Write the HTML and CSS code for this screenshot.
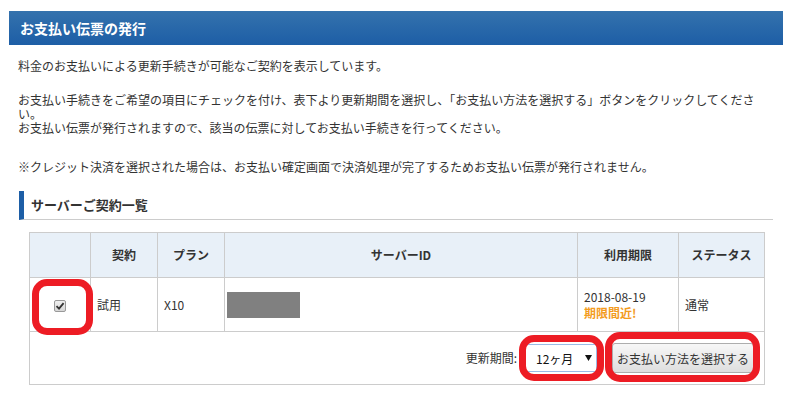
FILE: index.html
```html
<!DOCTYPE html>
<html lang="ja">
<head>
  <meta charset="utf-8">
  <title>お支払い伝票の発行</title>
  <link rel="stylesheet" href="styles.css">
</head>
<body>
  <div class="page">
    <h1 class="page-title">お支払い伝票の発行</h1>
    <div class="content">
      <p class="lead">料金のお支払いによる更新手続きが可能なご契約を表示しています。</p>
      <p class="lead lead-gap">お支払い手続きをご希望の項目にチェックを付け、表下より更新期間を選択し、「お支払い方法を選択する」ボタンをクリックしてください。
お支払い伝票が発行されますので、該当の伝票に対してお支払い手続きを行ってください。</p>
      <p class="note">※クレジット決済を選択された場合は、お支払い確定画面で決済処理が完了するためお支払い伝票が発行されません。</p>

      <h2 class="section-title">サーバーご契約一覧</h2>

      <table class="contracts">
        <colgroup>
          <col class="c-check">
          <col class="c-type">
          <col class="c-plan">
          <col class="c-id">
          <col class="c-limit">
          <col class="c-status">
        </colgroup>
        <thead>
          <tr>
            <th></th>
            <th>契約</th>
            <th>プラン</th>
            <th>サーバーID</th>
            <th>利用期限</th>
            <th>ステータス</th>
          </tr>
        </thead>
        <tbody>
          <tr>
            <td class="cell-check">
              <span class="mark mark-check">
                <span class="checkbox">
                  <svg width="10" height="10" viewBox="0 0 10 10"><path d="M1.5 5.2 L4 7.6 L8.6 2.2" fill="none" stroke="#333" stroke-width="1.8"/></svg>
                </span>
              </span>
            </td>
            <td>試用</td>
            <td>X10</td>
            <td class="cell-id"><span class="redacted"></span></td>
            <td>2018-08-19<br><span class="soon">期限間近!</span></td>
            <td>通常</td>
          </tr>
        </tbody>
        <tfoot>
          <tr>
            <td colspan="6">
              <div class="actions">
                <span class="period-label">更新期間:</span>
                <span class="mark mark-select">
                  <select class="period">
                    <option>12ヶ月</option>
                  </select>
                </span>
                <span class="mark mark-button">
                  <button class="pay-button">お支払い方法を選択する</button>
                </span>
              </div>
            </td>
          </tr>
        </tfoot>
      </table>
    </div>
  </div>
</body>
</html>
```

FILE: styles.css
```css
body { margin: 0; background: #fff; color: #333; font-family: "Noto Sans CJK JP", sans-serif; font-size: 12px; }
.page { padding: 11px 7px 0 9px; }
.page-title { margin: 0; height: 34px; line-height: 34px; padding-left: 11px; font-size: 14px; font-weight: bold; color: #fff; background: linear-gradient(#3472ad, #1d5ea6); }
.content { padding: 0 9px; }
.lead { margin: 14px 0 0; line-height: 14px; }
.lead-gap { margin-top: 20px; white-space: pre-line; }
.note { margin: 25px 0 0; line-height: 14px; }

.section-title { margin: 17px 1px 0; height: 28px; line-height: 28px; padding-left: 7px; font-size: 13px; font-weight: bold; border-left: 5px solid #1d5ea6; border-bottom: 1px solid #ccc; }

.contracts { margin: 12px 0 0 11px; width: 735px; border-collapse: collapse; table-layout: fixed; }
.c-check { width: 61px; }
.c-type { width: 67px; }
.c-plan { width: 67px; }
.c-id { width: 353px; }
.c-limit { width: 101px; }
.c-status { width: 86px; }
.contracts th, .contracts td { border: 1px solid #ccc; padding: 0 6px; line-height: 16px; text-align: left; vertical-align: middle; }
.contracts th { height: 44px; background: #e8f0f8; font-weight: bold; text-align: center; }
.contracts tbody td { height: 53px; }
.contracts tfoot td { height: 52px; padding-right: 10px; }
.cell-check { text-align: center !important; }
.cell-id { padding-left: 2px !important; }
.redacted { display: inline-block; width: 73px; height: 26px; background: #808080; vertical-align: middle; }
.soon { color: #f39c1f; font-weight: bold; }

.checkbox { display: inline-flex; align-items: center; justify-content: center; width: 10px; height: 10px; border: 1px solid #999; border-radius: 2px; background: linear-gradient(#f0f0f0, #d6d6d6); vertical-align: middle; }

.actions { display: flex; justify-content: flex-end; align-items: center; }
.period-label { margin-right: 8px; }
.period { appearance: none; width: 72px; height: 28px; padding: 0 0 0 10px; border: 1px solid #9bbbe6; border-radius: 0; background: #fff url("data:image/svg+xml;utf8,<svg xmlns='http://www.w3.org/2000/svg' width='7' height='6'><path d='M0 0h7L3.5 6z' fill='%23111'/></svg>") no-repeat right 4px center; font-family: inherit; font-size: 12px; color: #111; display: block; }
.mark-select { margin-right: 15px; }
.pay-button { display: block; height: 30px; padding: 0 4px; border: 1px solid #adadad; border-radius: 3px; background: linear-gradient(#f7f7f7, #dedede); font-family: inherit; font-size: 12px; color: #333; }

.mark { position: relative; display: inline-block; }
.mark::after { content: ""; position: absolute; border: 7px solid #ed1c24; border-radius: 15px; }
.mark-check::after { top: -18px; bottom: -22px; left: -22px; right: -27px; }
.mark-select::after { top: -9px; bottom: -9px; left: -6px; right: -7px; }
.mark-button::after { top: -11px; bottom: -9px; left: -7px; right: -6px; }
```
